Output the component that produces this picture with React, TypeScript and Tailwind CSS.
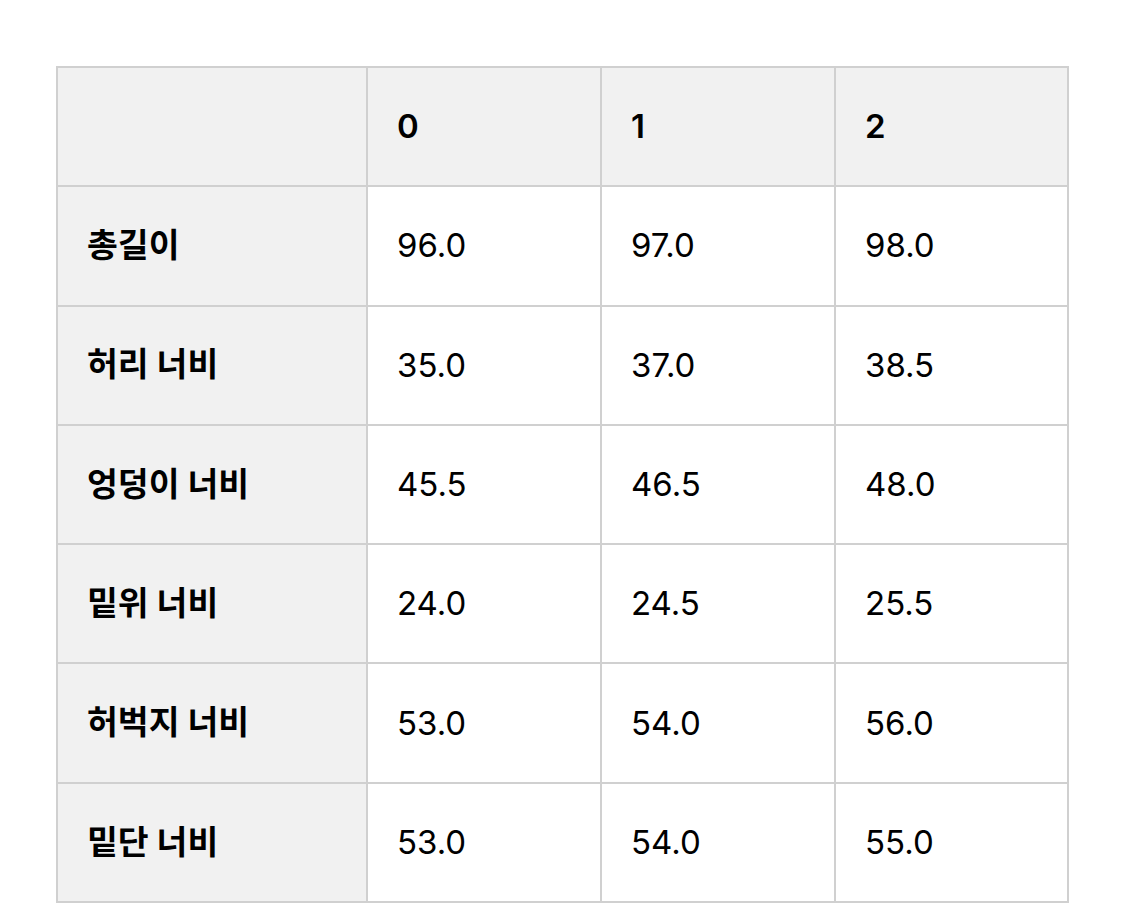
const rows: [string, string, string, string][] = [
  ["총길이", "96.0", "97.0", "98.0"],
  ["허리 너비", "35.0", "37.0", "38.5"],
  ["엉덩이 너비", "45.5", "46.5", "48.0"],
  ["밑위 너비", "24.0", "24.5", "25.5"],
  ["허벅지 너비", "53.0", "54.0", "56.0"],
  ["밑단 너비", "53.0", "54.0", "55.0"],
];

const font = { fontFamily: 'Inter, "Noto Sans CJK KR", sans-serif' };
const line = "border-2 border-[#d0d0d0]";

export default function App() {
  return (
    <div className="min-h-screen bg-white pt-[66px] pl-[56px]" style={font}>
      <table className="w-[1011px] table-fixed border-collapse text-[33px] leading-none text-black">
        <colgroup>
          <col className="w-[310px]" />
          <col className="w-[234px]" />
          <col className="w-[234px]" />
          <col className="w-[233px]" />
        </colgroup>
        <thead>
          <tr className="h-[119.3px] bg-[#f1f1f1]">
            <th className={line} />
            {["0", "1", "2"].map((h) => (
              <th key={h} className={`${line} pl-[29px] text-left font-semibold`}>
                {h}
              </th>
            ))}
          </tr>
        </thead>
        <tbody>
          {rows.map((r) => (
            <tr key={r[0]} className="h-[119.3px]">
              <th className={`${line} bg-[#f1f1f1] pl-[29px] text-left text-[33.5px] font-bold`}>
                {r[0]}
              </th>
              {r.slice(1).map((v, i) => (
                <td key={i} className={`${line} pl-[29px]`}>
                  {v}
                </td>
              ))}
            </tr>
          ))}
        </tbody>
      </table>
    </div>
  );
}
